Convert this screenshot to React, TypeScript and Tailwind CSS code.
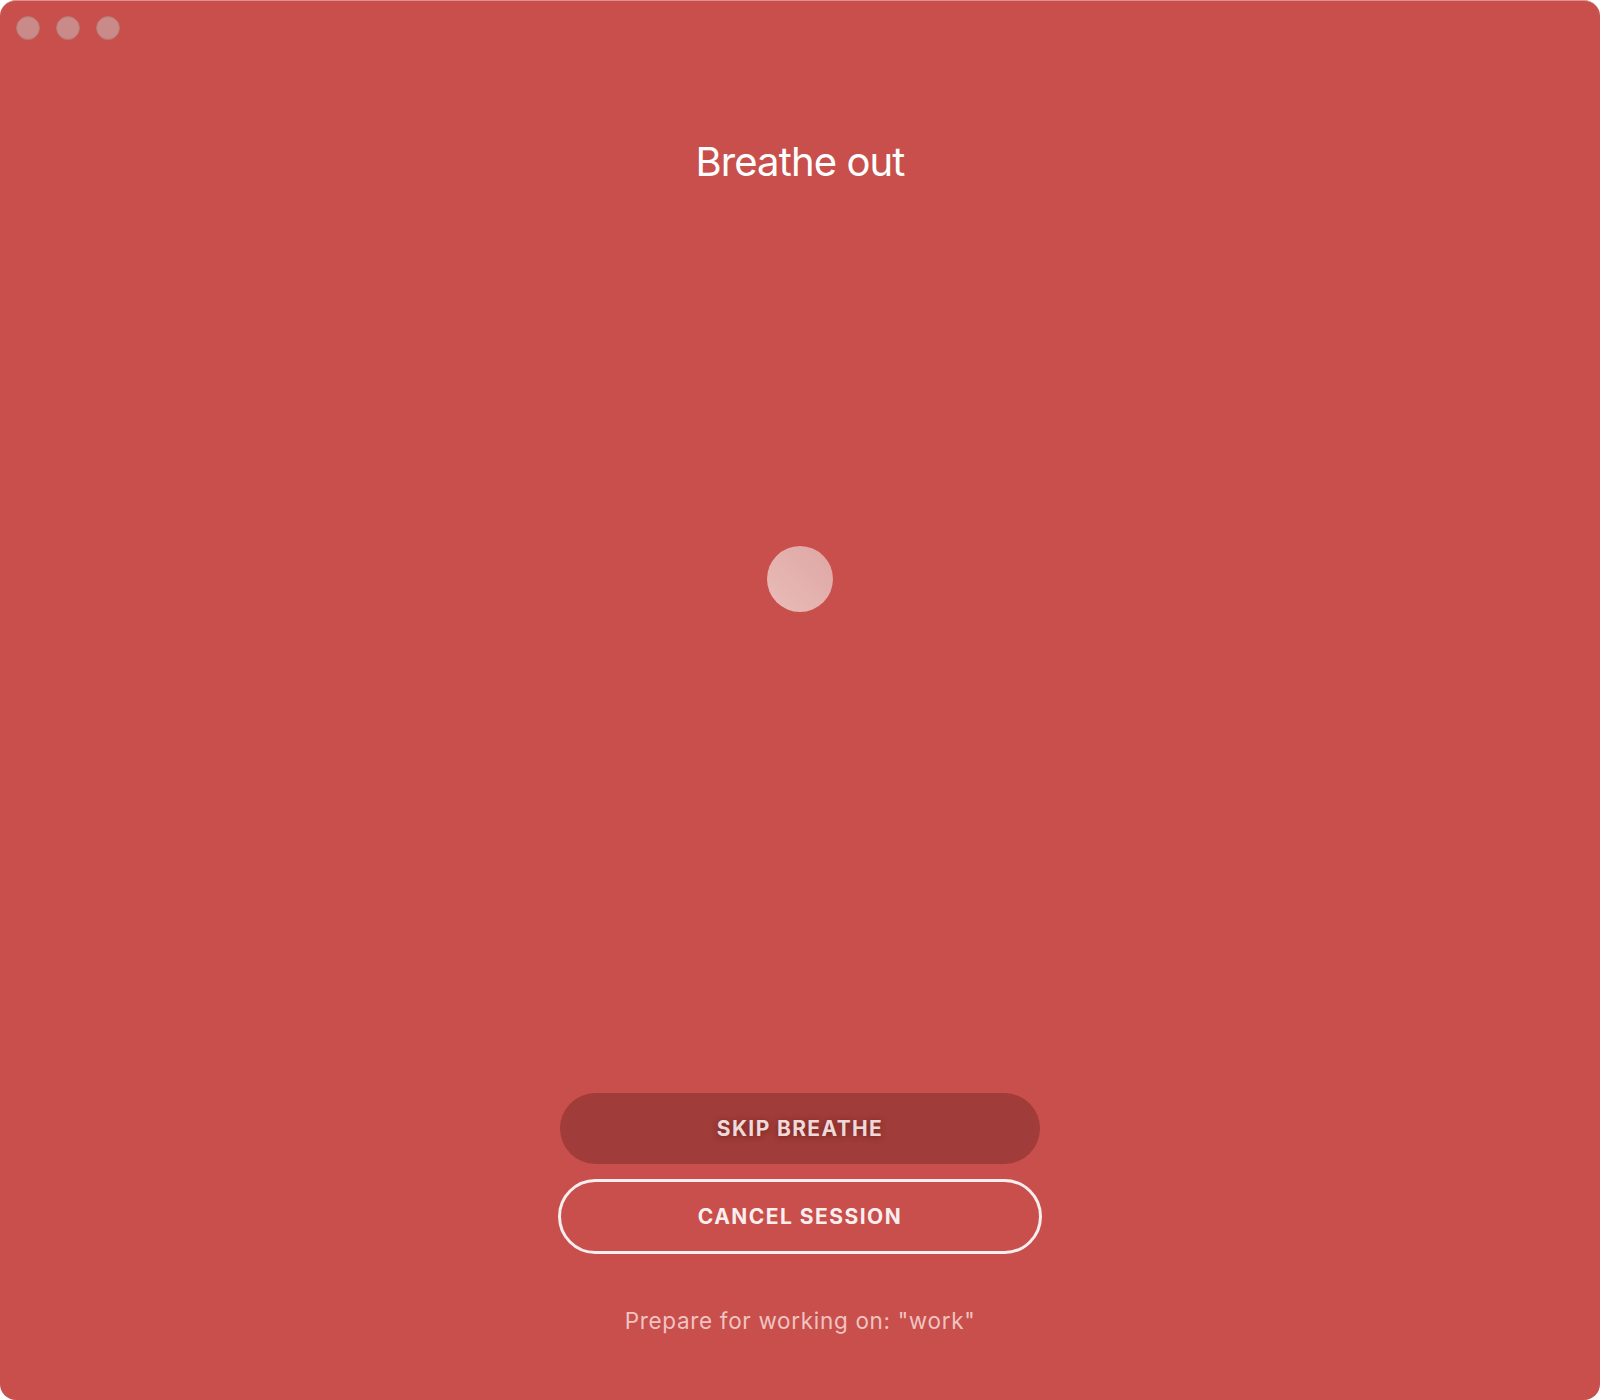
export default function App() {
    return (
        <div className="bg-white w-[1600px] h-[1400px] font-['Inter','Liberation_Sans',sans-serif]">
            <div className="relative w-full h-full bg-[#c84f4b] rounded-[16px] border-t border-[#e0918d] overflow-hidden flex flex-col items-center">
                {/* window controls */}
                <div className="self-start flex gap-[16px] pl-[16px] pt-[15px]">
                    <div className="w-[24px] h-[24px] rounded-full bg-[#c98a88] border border-[#b87673]" />
                    <div className="w-[24px] h-[24px] rounded-full bg-[#c98a88] border border-[#b87673]" />
                    <div className="w-[24px] h-[24px] rounded-full bg-[#c98a88] border border-[#b87673]" />
                </div>

                <h1 className="mt-[98px] text-[40px] leading-[48px] text-white font-normal tracking-[-0.022em]">Breathe out</h1>

                <div className="mt-[360px] w-[66px] h-[66px] rounded-full bg-gradient-to-tr from-[#e9bcb9] to-[#dea6a3]" />

                <button className="mt-[481px] w-[480px] h-[71px] rounded-full bg-[#a03c39] text-[#eed9d8] text-[21px] font-bold tracking-[0.065em] [text-shadow:0_1px_6px_rgba(60,0,0,0.45)]">
                    SKIP BREATHE
                </button>
                <button className="mt-[15px] w-[484px] h-[75px] rounded-full border-[3px] border-[#fbeeee] text-[#fbeeee] text-[21px] font-bold tracking-[0.07em]">
                    CANCEL SESSION
                </button>

                <p className="mt-[53px] text-[22.5px] leading-[28px] text-[#f1c3c1] tracking-[0.03em]">Prepare for working on: "work"</p>
            </div>
        </div>
    );
}
